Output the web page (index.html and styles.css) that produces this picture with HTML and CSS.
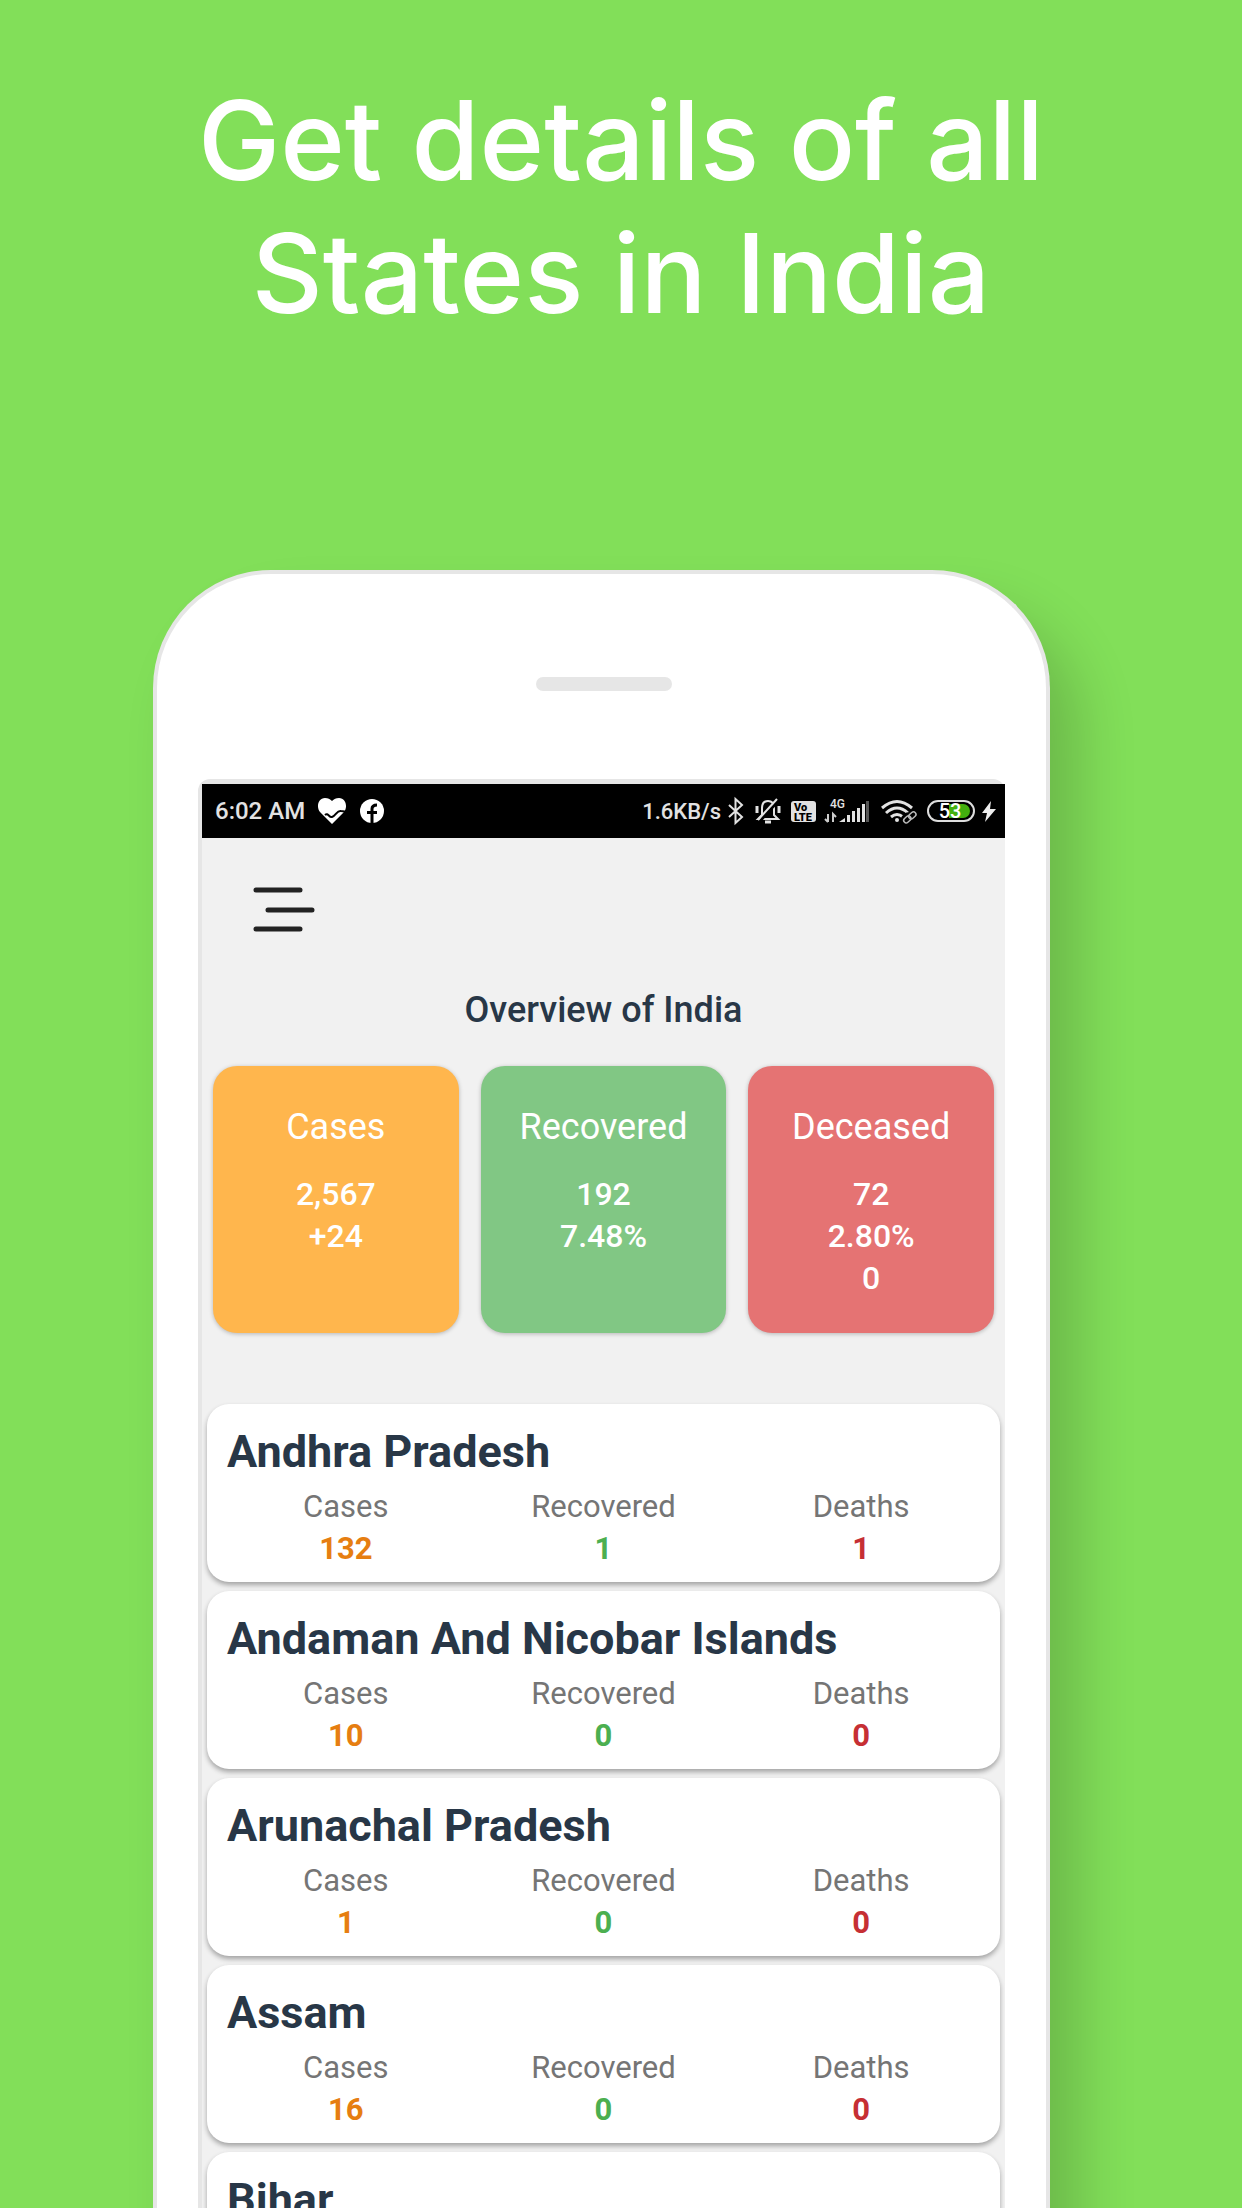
FILE: index.html
```html
<!DOCTYPE html>
<html lang="en">
<head>
<meta charset="utf-8">
<meta name="viewport" content="width=device-width, initial-scale=1">
<title>Get details of all States in India</title>
<link rel="stylesheet" href="styles.css">
</head>
<body>
<main class="promo">
  <h1 class="headline">Get details of all<br>States in India</h1>

  <div class="phone">
    <div class="phone-top"><span class="speaker"></span></div>

    <div class="screen">
      <div class="status-bar">
        <span>6:02 AM</span>
        <svg class="heart" width="30" height="30" viewBox="0 0 30 30" aria-hidden="true">
          <path d="M15 28 3 16C-1 11 1 2 8 2c3 0 5 1 7 3 2-2 4-3 7-3 7 0 9 9 5 14z" fill="#fff"/>
          <path d="M8 19c3-3 4 3 7 2 4-1 5-7 9-6 2 0 4 1 6 0" fill="none" stroke="#000" stroke-width="2"/>
        </svg>
        <svg width="26" height="30" viewBox="0 0 26 30" aria-hidden="true">
          <circle cx="13" cy="15" r="12" fill="#fff"/>
          <path d="M13 28V13q0-4 5-4M8 16.500h10" fill="none" stroke="#000" stroke-width="3"/>
        </svg>
        <div class="status-right">
          <span class="speed">1.6KB/s</span>
          <svg width="21" height="30" viewBox="0 0 21 30" aria-hidden="true">
            <path d="M4 9l13 12-6.500 6V3L17 9 4 21" fill="none" stroke="#e2e2e2" stroke-width="2"/>
          </svg>
          <svg width="36" height="30" viewBox="0 0 36 30" fill="none" stroke="#e2e2e2" stroke-width="2" aria-hidden="true">
            <path d="M8 23h20l-4-4v-7c0-4-2-7-6-7s-6 3-6 7v7z"/>
            <path d="M15 26h6" stroke-width="3"/>
            <path d="M7 10v7M29 10v7" stroke-width="3"/>
            <path d="M10 25 29 4" stroke="#000" stroke-width="3"/>
            <path d="M8 24 27 3"/>
          </svg>
          <svg width="27" height="30" viewBox="0 0 27 30" role="img" aria-label="VoLTE">
            <rect x="1" y="5" width="25" height="21" rx="3" fill="#e2e2e2"/>
            <text x="4" y="15" class="volte">Vo</text>
            <text x="4" y="25" class="volte">LTE</text>
          </svg>
          <svg width="51" height="30" viewBox="0 0 51 30" aria-hidden="true">
            <text x="9" y="12" class="network">4G</text>
            <path d="M7 18v8M4 23l3 3M12 26v-8l3 3" fill="none" stroke="#ccc" stroke-width="2"/>
            <path d="M18 26l6-4v4zM26 19h3v7h-3zM31 15h3v11h-3zM36 12h3v14h-3zM41 8h3v18h-3z" fill="#e2e2e2"/>
            <path d="M45 5h3v21h-3z" fill="#555"/>
          </svg>
          <svg width="43" height="30" viewBox="0 0 43 30" fill="none" stroke="#e2e2e2" stroke-width="3" aria-hidden="true">
            <path d="M6 12Q21-1 36 12M10 17q11-10 22 0M15 21q6-5 12 0"/>
            <circle cx="21" cy="24" r="2" fill="#e2e2e2" stroke="none"/>
            <g stroke="#000" stroke-width="5"><rect x="27" y="20" width="9" height="6" rx="3" transform="rotate(-42 31 23)"/></g>
            <g stroke="#bbb" stroke-width="1.500"><rect x="27" y="21" width="8" height="5" rx="2.500" transform="rotate(-42 31 23)"/><rect x="32" y="17" width="8" height="5" rx="2.500" transform="rotate(-42 36 19)"/></g>
          </svg>
          <svg width="54" height="30" viewBox="0 0 54 30" role="img" aria-label="Battery 53 percent">
            <rect x="5" y="5" width="46" height="20" rx="10" fill="none" stroke="#ddd" stroke-width="2"/>
            <path d="M26 8h14a7 7 0 0 1 0 14H26z" fill="#43b00e"/>
            <text x="27" y="22" class="battery-level">53</text>
          </svg>
          <svg width="16" height="30" viewBox="0 0 16 30" aria-hidden="true">
            <path d="M10 5 1 17h5L4 26l11-13H9z" fill="#eee"/>
          </svg>
        </div>
      </div>

      <button class="menu" type="button" aria-label="Open menu">
        <svg width="62" height="44" viewBox="0 0 62 44" aria-hidden="true">
          <path d="M3 2h44M15 22h44M3 41h44" stroke="#222" stroke-width="5" stroke-linecap="round"/>
        </svg>
      </button>

      <h2 class="overview-title">Overview of India</h2>
      <section class="overview">
        <div class="tile tile-cases"><h3>Cases</h3><p>2,567</p><p>+24</p></div>
        <div class="tile tile-recovered"><h3>Recovered</h3><p>192</p><p>7.48%</p></div>
        <div class="tile tile-deceased"><h3>Deceased</h3><p>72</p><p>2.80%</p><p>0</p></div>
      </section>

      <section class="states">
        <article class="state">
          <h3>Andhra Pradesh</h3>
          <dl>
            <div><dt>Cases</dt><dd class="cases">132</dd></div>
            <div><dt>Recovered</dt><dd class="recovered">1</dd></div>
            <div><dt>Deaths</dt><dd class="deaths">1</dd></div>
          </dl>
        </article>
        <article class="state">
          <h3>Andaman And Nicobar Islands</h3>
          <dl>
            <div><dt>Cases</dt><dd class="cases">10</dd></div>
            <div><dt>Recovered</dt><dd class="recovered">0</dd></div>
            <div><dt>Deaths</dt><dd class="deaths">0</dd></div>
          </dl>
        </article>
        <article class="state">
          <h3>Arunachal Pradesh</h3>
          <dl>
            <div><dt>Cases</dt><dd class="cases">1</dd></div>
            <div><dt>Recovered</dt><dd class="recovered">0</dd></div>
            <div><dt>Deaths</dt><dd class="deaths">0</dd></div>
          </dl>
        </article>
        <article class="state">
          <h3>Assam</h3>
          <dl>
            <div><dt>Cases</dt><dd class="cases">16</dd></div>
            <div><dt>Recovered</dt><dd class="recovered">0</dd></div>
            <div><dt>Deaths</dt><dd class="deaths">0</dd></div>
          </dl>
        </article>
        <article class="state">
          <h3>Bihar</h3>
        </article>
      </section>
    </div>
  </div>
</main>
</body>
</html>
```
FILE: styles.css
```css
* {
  box-sizing: border-box;
  margin: 0;
  padding: 0;
}

body {
  background: #82df59;
  font-family: Roboto, "Liberation Sans", sans-serif;
}

/* The phone runs off the bottom edge of the window. */
.promo {
  display: flex;
  flex-direction: column;
  height: 100vh;
  overflow: hidden;
  padding: 74px 192px 0 153px;
}

.headline {
  margin: 0 -192px 230px -153px;
  color: #fff;
  font-family: Inter, "Open Sans", sans-serif;
  font-size: 110px;
  font-weight: 500;
  line-height: 133px;
  text-align: center;
}

.phone {
  flex: none;
  padding: 0 41px;
  border: 4px solid #e6e6e6;
  border-bottom: 0;
  border-radius: 118px 118px 0 0;
  background: #fff;
  box-shadow: 30px 40px 56px rgba(0, 0, 0, 0.17);
}

.phone-top {
  display: flex;
  align-items: center;
  justify-content: center;
  height: 205px;
  padding: 14px 0 0 4px;
}

.speaker {
  width: 136px;
  height: 14px;
  border-radius: 7px;
  background: #e6e6e6;
}

.screen {
  border: solid #e6e6e6;
  border-width: 5px 0 0 4px;
  border-radius: 12px 12px 0 0;
  background: #f1f1f1;
}

.status-bar {
  display: flex;
  align-items: center;
  height: 54px;
  padding: 0 8px 0 13px;
  background: #000;
  color: #e2e2e2;
  font-size: 24px;
  font-weight: 500;
}

.heart {
  margin: 0 12px;
}

.status-right {
  display: flex;
  align-items: center;
  gap: 4px;
  margin-left: auto;
}

.speed {
  font-size: 22px;
}

.volte {
  font-size: 11px;
  font-weight: 900;
}

.network {
  fill: #e2e2e2;
  font-size: 12px;
}

.battery-level {
  fill: #fff;
  font-size: 20px;
  text-anchor: middle;
}

.menu {
  display: block;
  margin: 50px 0 0 51px;
  border: 0;
  background: none;
}

.menu svg {
  display: block;
  overflow: visible;
}

.overview-title {
  margin-top: 57px;
  color: #283747;
  font-size: 36px;
  font-weight: 500;
  line-height: 42px;
  text-align: center;
}

.overview {
  display: grid;
  grid-template-columns: repeat(3, 1fr);
  gap: 22px;
  padding: 35px 11px 0;
}

.tile {
  min-height: 267px;
  padding: 40px 0 32px;
  border-radius: 24px;
  box-shadow: 0 1px 4px rgba(0, 0, 0, 0.25);
  color: #fff;
  text-align: center;
}

.tile h3 {
  margin-bottom: 25px;
  font-size: 36px;
  font-weight: 400;
  line-height: 42px;
}

.tile p {
  font-size: 32px;
  font-weight: 500;
  line-height: 42px;
}

.tile-cases {
  background: #ffb64d;
}

.tile-recovered {
  background: #81c784;
}

.tile-deceased {
  background: #e57373;
}

.states {
  display: grid;
  gap: 9px;
  padding: 71px 5px 9px;
}

.state {
  min-height: 178px;
  padding: 20px 10px 12px;
  border-radius: 22px;
  background: #fff;
  box-shadow: 0 3px 5px rgba(0, 0, 0, 0.32);
}

.state h3 {
  margin-bottom: 6px;
  padding: 0 10px;
  color: #283747;
  font-size: 45px;
  font-weight: 700;
  line-height: 56px;
}

.state dl {
  display: grid;
  grid-template-columns: repeat(3, 1fr);
  color: #757575;
  font-size: 31px;
  line-height: 42px;
  text-align: center;
}

.state dd {
  font-weight: 700;
}

.cases {
  color: #e67e11;
}

.recovered {
  color: #4caf50;
}

.deaths {
  color: #c62f34;
}
```
